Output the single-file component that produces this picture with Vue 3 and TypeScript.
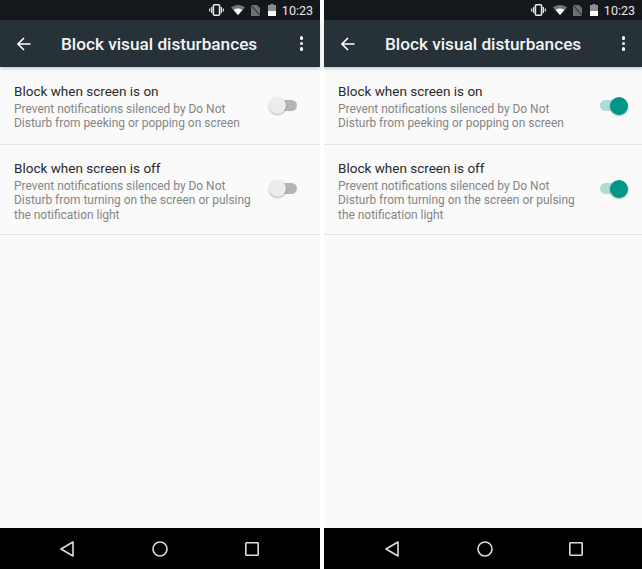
<template>
  <div class="shots">
    <section v-for="(shot, i) in shots" :key="i" class="phone" :class="{ 'is-right': i === 1 }">
      <div class="statusbar">
        <svg class="st-icon vibrate" width="15" height="12" viewBox="0 0 15 12">
          <rect x="4.4" y="0.8" width="6.2" height="10.4" rx="1" fill="none" stroke="#e8e8e8" stroke-width="1.6" />
          <path d="M2.6 3v6M0.7 4.4v3.2M12.4 3v6M14.3 4.4v3.2" stroke="#e8e8e8" stroke-width="1.2" />
        </svg>
        <svg class="st-icon wifi" width="14" height="10" viewBox="0 0 14 10">
          <path d="M0 2.6C4 -0.8 10 -0.8 14 2.6L7 10Z" fill="#fff" opacity="0.4" />
          <path d="M2.6 5C5 3 9 3 11.4 5L7 10Z" fill="#fff" />
        </svg>
        <svg class="st-icon sim" width="9" height="11" viewBox="0 0 9 11">
          <path d="M0 11V0H6L9 3V11Z" fill="#6d7072" />
          <path d="M0.5 0.5L9 10.5" stroke="#1a1e21" stroke-width="1" />
        </svg>
        <svg class="st-icon battery" width="8" height="12" viewBox="0 0 8 12">
          <path d="M2.5 0H5.5V1H8V12H0V1H2.5Z" fill="#8a8d8f" />
          <rect x="0" y="7" width="8" height="5" fill="#fff" />
        </svg>
        <span class="clock">10:23</span>
      </div>
      <header class="toolbar">
        <svg class="back" width="14" height="14" viewBox="0 0 14 14">
          <path d="M13.5 7H1.5M7 1L1 7L7 13" fill="none" stroke="#fff" stroke-width="1.6" />
        </svg>
        <h1 class="title">Block visual disturbances</h1>
        <div class="more"><i></i><i></i><i></i></div>
      </header>
      <main class="content">
        <div v-for="row in rows" :key="row.title" class="row">
          <div class="text">
            <div class="row-title">{{ row.title }}</div>
            <div class="row-sub">
              <div v-for="line in row.lines" :key="line">{{ line }}</div>
            </div>
          </div>
          <span class="switch" :class="{ on: shot.on }"><span class="track"></span><span class="thumb"></span></span>
        </div>
      </main>
      <footer class="navbar">
        <svg width="16" height="18" viewBox="0 0 16 18">
          <path d="M14 2V16L2 9Z" fill="none" stroke="#dedede" stroke-width="1.6" stroke-linejoin="round" />
        </svg>
        <svg width="16" height="16" viewBox="0 0 16 16">
          <circle cx="8" cy="8" r="7" fill="none" stroke="#dedede" stroke-width="1.6" />
        </svg>
        <svg width="14" height="14" viewBox="0 0 14 14">
          <rect x="0.8" y="0.8" width="12.4" height="12.4" rx="0.6" fill="none" stroke="#dedede" stroke-width="1.6" />
        </svg>
      </footer>
    </section>
  </div>
</template>

<script setup lang="ts">
const shots = [{ on: false }, { on: true }];

const rows = [
  {
    title: 'Block when screen is on',
    lines: ['Prevent notifications silenced by Do Not', 'Disturb from peeking or popping on screen'],
  },
  {
    title: 'Block when screen is off',
    lines: [
      'Prevent notifications silenced by Do Not',
      'Disturb from turning on the screen or pulsing',
      'the notification light',
    ],
  },
];
</script>

<style>
html,
body {
  margin: 0;
  background: #fff;
}
</style>

<style scoped>
.shots {
  display: flex;
  gap: 4px;
  width: 642px;
  height: 569px;
  overflow: hidden;
  font-family: Roboto, 'Liberation Sans', sans-serif;
}

.phone {
  display: flex;
  flex-direction: column;
  width: 320px;
  height: 569px;
  flex: none;
  background: #fafafa;
}

.phone.is-right {
  width: 318px;
}

.statusbar {
  display: flex;
  align-items: center;
  height: 20px;
  padding-right: 7px;
  background: #14181b;
  box-sizing: border-box;
  justify-content: flex-end;
}

.st-icon {
  flex: none;
}

.vibrate {
  margin-right: 7px;
}

.wifi {
  margin-right: 6px;
}

.sim {
  margin-right: 8px;
}

.battery {
  margin-right: 6px;
}

.clock {
  font-size: 12.5px;
  color: #e8e8e8;
}

.toolbar {
  display: flex;
  align-items: center;
  height: 47px;
  padding: 0 17px 0 17px;
  background: #263238;
  box-shadow: 0 2px 3px rgba(0, 0, 0, 0.18);
  position: relative;
}

.back {
  flex: none;
}

.title {
  flex: 1;
  margin: 0 0 0 30px;
  font-size: 17.2px;
  font-weight: 500;
  color: #f2f4f4;
}

.more {
  display: flex;
  flex-direction: column;
  gap: 2px;
}

.more i {
  display: block;
  width: 3.5px;
  height: 3.5px;
  border-radius: 50%;
  background: #fff;
}

.content {
  flex: 1;
}

.row {
  display: flex;
  padding: 14px 14px 0;
  border-bottom: 1px solid #e4e4e4;
  position: relative;
}

.row:first-child {
  height: 62px;
  padding-top: 15px;
}

.row:nth-child(2) {
  height: 75px;
}

.text {
  flex: 1;
}

.row-title {
  font-size: 13.5px;
  line-height: 18px;
  color: #2a2a2a;
}

.row-sub {
  margin-top: 2px;
  font-size: 11.95px;
  line-height: 14.3px;
  color: #858585;
}

.switch {
  position: absolute;
  right: 22px;
  top: 30px;
  width: 29px;
  height: 18px;
}

.row:nth-child(2) .switch {
  top: 35px;
}

.is-right .switch {
  right: 14px;
}

.track {
  position: absolute;
  left: 1px;
  top: 3px;
  width: 27px;
  height: 11px;
  border-radius: 6px;
  background: #b5b5b5;
}

.thumb {
  position: absolute;
  left: 0;
  top: 0;
  width: 17px;
  height: 17px;
  border-radius: 50%;
  background: #ececec;
  box-shadow: 0 1px 2px rgba(0, 0, 0, 0.3);
}

.switch.on .track {
  background: #b0dcd7;
}

.switch.on .thumb {
  left: 11px;
  width: 18px;
  height: 18px;
  background: #009688;
}

.navbar {
  display: flex;
  align-items: center;
  justify-content: space-between;
  height: 41px;
  padding: 0 61px 0 59px;
  background: #000;
}

.is-right .navbar {
  padding: 0 59px 0 60px;
}
</style>
